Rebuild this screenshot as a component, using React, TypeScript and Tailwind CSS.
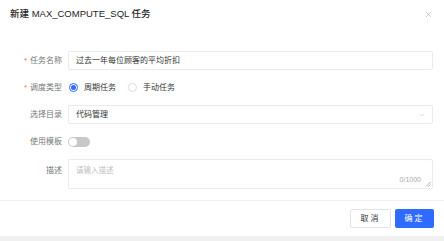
import { ChevronDown, X } from "lucide-react";

const font = {
  fontFamily: '"Liberation Sans", "Noto Sans CJK SC", sans-serif',
};

function Label({ text, required }: { text: string; required?: boolean }) {
  return (
    <div className="w-[62px] shrink-0 flex items-center justify-end text-[8px] text-[#777]">
      {required && <span className="text-[#ff6b6b] mr-[3px] text-[8px]">*</span>}
      {text}
    </div>
  );
}

function Radio({ checked, text }: { checked?: boolean; text: string }) {
  return (
    <div className="flex items-center gap-[6px]">
      <span
        className={
          checked
            ? "w-[9px] h-[9px] rounded-full border border-[#2f6bff] flex items-center justify-center"
            : "w-[9px] h-[9px] rounded-full border border-[#dcdcdc]"
        }
      >
        {checked && <span className="w-[5px] h-[5px] rounded-full bg-[#2f6bff]" />}
      </span>
      <span className="text-[8px] text-[#333]">{text}</span>
    </div>
  );
}

export default function App() {
  return (
    <div className="w-[444px] h-[241px] bg-white flex flex-col" style={font}>
      {/* Header */}
      <div className="h-[29px] flex items-center justify-between pl-[10px] pr-[11px]">
        <span className="text-[9.5px] font-medium text-[#222]">新建 MAX_COMPUTE_SQL 任务</span>
        <X className="w-[9px] h-[9px] text-[#aaa]" strokeWidth={1.5} />
      </div>

      {/* Form */}
      <div className="flex-1 flex flex-col gap-[8px] pt-[22px] pr-[11px]">
        <div className="h-[19px] flex gap-[6px]">
          <Label text="任务名称" required />
          <div className="flex-1 border border-[#ebebeb] rounded-[2px] flex items-center px-[7px] text-[8px] text-[#333]">
            过去一年每位顾客的平均折扣
          </div>
        </div>

        <div className="h-[19px] flex gap-[6px]">
          <Label text="调度类型" required />
          <div className="flex items-center gap-[12px] pl-[1px]">
            <Radio checked text="周期任务" />
            <Radio text="手动任务" />
          </div>
        </div>

        <div className="h-[19px] flex gap-[6px]">
          <Label text="选择目录" />
          <div className="flex-1 border border-[#ebebeb] rounded-[2px] flex items-center justify-between pl-[7px] pr-[6px] text-[8px] text-[#333]">
            代码管理
            <ChevronDown className="w-[8px] h-[8px] text-[#c4c4c4]" strokeWidth={1.5} />
          </div>
        </div>

        <div className="h-[19px] flex gap-[6px]">
          <Label text="使用模板" />
          <div className="flex items-center">
            <span className="w-[22px] h-[10px] rounded-full bg-[#c8c8c8] flex items-center px-[1px]">
              <span className="w-[8px] h-[8px] rounded-full bg-white" />
            </span>
          </div>
        </div>

        <div className="h-[30px] flex gap-[6px]">
          <div className="w-[62px] shrink-0 flex justify-end pt-[6px] text-[8px] text-[#777]">描述</div>
          <div className="flex-1 border border-[#ebebeb] rounded-[2px] relative pl-[7px] pt-[5px] text-[7.5px] text-[#c0c0c0]">
            请输入描述
            <span className="absolute right-[11px] bottom-[3px] text-[7px] text-[#aaa]">0/1000</span>
            <svg className="absolute right-[1px] bottom-[1px]" width="6" height="6" viewBox="0 0 6 6">
              <path d="M5.5 1 L1 5.5 M5.5 3.5 L3.5 5.5" stroke="#999" strokeWidth="0.8" fill="none" />
            </svg>
          </div>
        </div>
      </div>

      {/* Footer */}
      <div className="h-[36px] border-t border-[#f0f0f0] flex items-center justify-end gap-[4px] pr-[10px]">
        <button className="w-[41px] h-[19px] border border-[#e3e3e3] rounded-[2px] bg-white text-[8px] text-[#333] tracking-[2px]">
          取消
        </button>
        <button className="w-[39px] h-[19px] rounded-[2px] bg-[#2f6bff] text-[8px] text-white tracking-[2px]">
          确定
        </button>
      </div>
      <div className="h-[5px] bg-[#f0f0f0]" />
    </div>
  );
}
